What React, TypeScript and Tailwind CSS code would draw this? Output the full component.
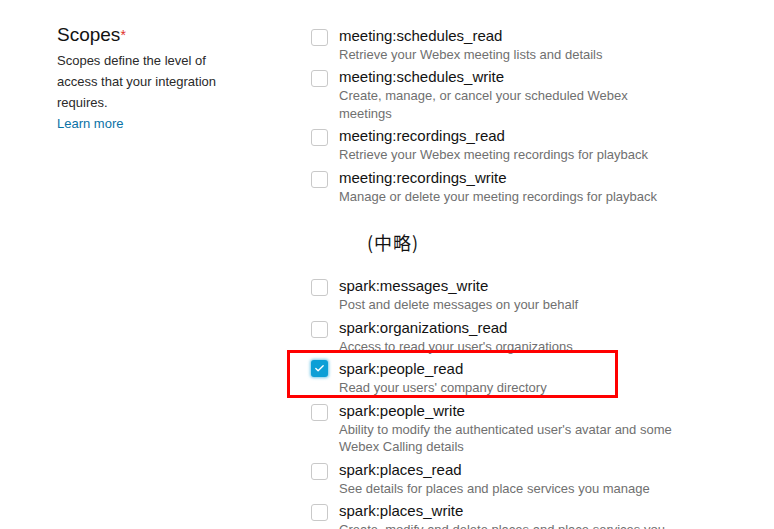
import { Check } from "lucide-react";

type Scope = { name: string; desc: string[]; checked?: boolean; highlight?: boolean };

const topScopes: Scope[] = [
  { name: "meeting:schedules_read", desc: ["Retrieve your Webex meeting lists and details"] },
  { name: "meeting:schedules_write", desc: ["Create, manage, or cancel your scheduled Webex", "meetings"] },
  { name: "meeting:recordings_read", desc: ["Retrieve your Webex meeting recordings for playback"] },
  { name: "meeting:recordings_write", desc: ["Manage or delete your meeting recordings for playback"] },
];

const bottomScopes: Scope[] = [
  { name: "spark:messages_write", desc: ["Post and delete messages on your behalf"] },
  { name: "spark:organizations_read", desc: ["Access to read your user's organizations"] },
  { name: "spark:people_read", desc: ["Read your users' company directory"], checked: true, highlight: true },
  { name: "spark:people_write", desc: ["Ability to modify the authenticated user's avatar and some", "Webex Calling details"] },
  { name: "spark:places_read", desc: ["See details for places and place services you manage"] },
  { name: "spark:places_write", desc: ["Create, modify and delete places and place services you"] },
];

function ScopeRow({ scope }: { scope: Scope }) {
  return (
    <div className="relative flex mb-[3px]">
      {scope.highlight && (
        <div className="absolute left-[-24px] top-[-8px] w-[331px] h-[48px] border-[3px] border-[#ff0000] pointer-events-none" />
      )}
      {scope.checked ? (
        <div className="mt-[2px] w-[17px] h-[17px] shrink-0 rounded-[3px] bg-[#0c9fd6] shadow-[0_0_3px_1px_rgba(12,159,214,0.55)] flex items-center justify-center">
          <Check className="w-[11px] h-[11px] text-white" strokeWidth={3} />
        </div>
      ) : (
        <div className="mt-[4px] w-[17px] h-[17px] shrink-0 rounded-[3px] border border-[#c9c9c9] bg-white" />
      )}
      <div className="ml-[11px]">
        <div className="text-[15px] leading-[21px] text-[#121212]">{scope.name}</div>
        {scope.desc.map((d) => (
          <div key={d} className="text-[13px] leading-[17.5px] text-[#707070] whitespace-nowrap">
            {d}
          </div>
        ))}
      </div>
    </div>
  );
}

export default function App() {
  return (
    <div className="w-[774px] h-[529px] overflow-hidden bg-white font-['Liberation_Sans',Arial,sans-serif]">
      <div className="flex pl-[57px] pt-[23px]">
        <div className="w-[254px] shrink-0">
          <div className="text-[19px] leading-[24px] text-[#121212]">
            Scopes<span className="text-[#e0302a] text-[14px] align-top">*</span>
          </div>
          <div className="mt-[2.5px] text-[13px] leading-[21px] text-[#2a2a2a] w-[170px]">
            Scopes define the level of access that your integration requires.
          </div>
          <div className="text-[13px] leading-[21px] text-[#0a72a6]">Learn more</div>
        </div>
        <div className="pt-[1.5px]">
          {topScopes.map((s) => (
            <ScopeRow key={s.name} scope={s} />
          ))}
          <div className="pl-[56px] pt-[21px] pb-[20px] text-[18px] leading-[26px] tracking-[1px] text-[#121212] font-['Noto_Sans_CJK_JP',sans-serif]">
            (中略)
          </div>
          {bottomScopes.map((s) => (
            <ScopeRow key={s.name} scope={s} />
          ))}
        </div>
      </div>
    </div>
  );
}
